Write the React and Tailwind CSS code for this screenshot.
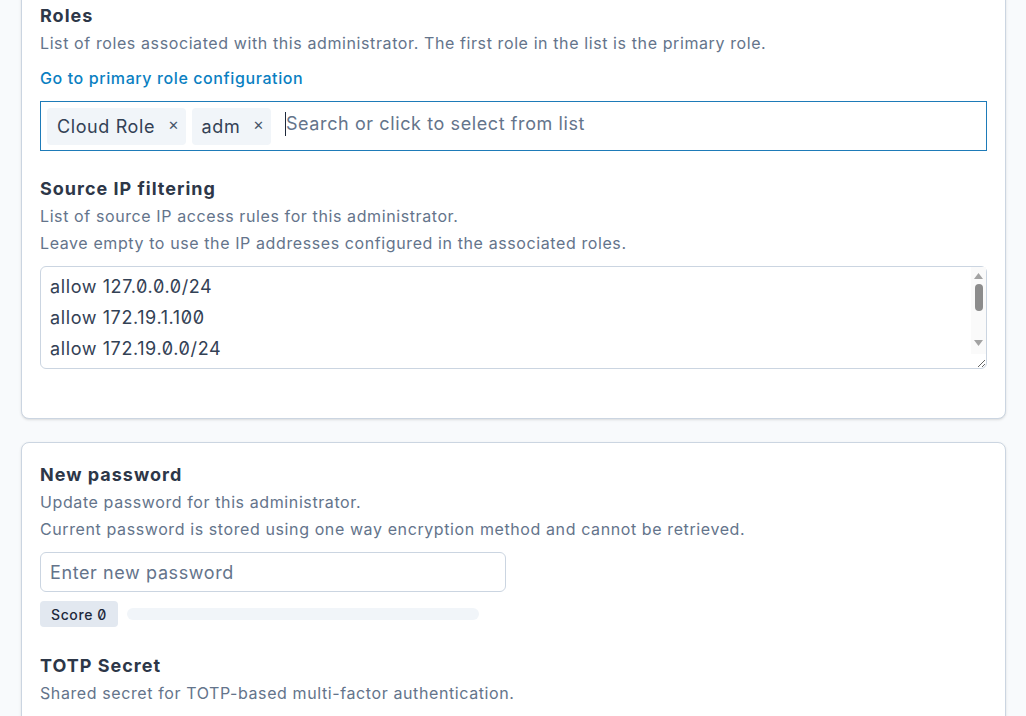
import { useState } from "react";

const ipRules = [
  "allow 127.0.0.0/24",
  "allow 172.19.1.100",
  "allow 172.19.0.0/24",
  "allow 10.10.0.0/16",
  "allow 192.168.1.0/24",
  "deny 0.0.0.0/0",
].join("\n");

function Tag({ label }) {
  return (
    <span className="flex items-center h-[37px] pl-[10px] pr-[6px] rounded bg-[#f1f5f9] text-[18px] text-[#334155]">
      {label}
      <span className="ml-[13px] text-[13px] text-[#475569]">✕</span>
    </span>
  );
}

// fake classic scrollbar, the headless browser hides native ones
function ScrollStrip() {
  return (
    <div className="absolute top-[1px] right-[1px] bottom-[15px] w-[15px] bg-[#fafafa] flex flex-col items-center">
      <svg width="9" height="6" viewBox="0 0 9 6" className="mt-[6px]">
        <path d="M4.5 0 L9 6 L0 6 Z" fill="#a3a3a3" />
      </svg>
      <div className="mt-[5px] w-[8px] h-[27px] rounded-full bg-[#8c8c8c]" />
      <div className="flex-1" />
      <svg width="9" height="6" viewBox="0 0 9 6" className="mb-[8px]">
        <path d="M0 0 L9 0 L4.5 6 Z" fill="#a3a3a3" />
      </svg>
    </div>
  );
}

function App() {
  const [pw, setPw] = useState("");

  return (
    <div className="min-h-screen bg-[#f8fafc] pl-[21px] pr-[20px] font-['Inter',_'Liberation_Sans',_sans-serif] tracking-[0.6px] overflow-hidden">
      {/* roles + ip filtering */}
      <section className="-mt-[23px] bg-white border border-[#cbd5e1] rounded-lg shadow-sm pt-[24px] pb-[49px] px-[18px]">
        <h2 className="text-[18px] leading-[28px] font-bold tracking-[1px] text-[#2d3748]">Roles</h2>
        <p className="text-[16px] leading-[27px] text-[#64748b]">
          List of roles associated with this administrator. The first role in the list is the primary role.
        </p>
        <a href="#" className="block mt-[8px] text-[16px] leading-[27px] font-medium text-[#0a7fc2]">
          Go to primary role configuration
        </a>

        <div className="mt-[9px] h-[50px] border border-[#1e7bb8] flex items-center gap-[6px] px-[6px]">
          <Tag label="Cloud Role" />
          <Tag label="adm" />
          <div className="ml-[8px] flex items-center -mt-[5px] text-[18px] text-[#64748b]">
            <span className="w-px h-[24px] bg-[#1e293b]" />
            <span>Search or click to select from list</span>
          </div>
        </div>

        <h2 className="mt-[24px] text-[18px] leading-[28px] font-bold tracking-[1px] text-[#2d3748]">
          Source IP filtering
        </h2>
        <p className="text-[16px] leading-[27px] text-[#64748b]">
          List of source IP access rules for this administrator.
        </p>
        <p className="text-[16px] leading-[27px] text-[#64748b]">
          Leave empty to use the IP addresses configured in the associated roles.
        </p>
        <div className="relative mt-[9px]">
          <textarea
            defaultValue={ipRules}
            rows={3}
            className="block w-full h-[103px] border border-[#cbd5e1] rounded-md pl-[9px] pr-[20px] py-[4px] text-[18px] leading-[31px] text-[#334155] [font-feature-settings:'zero'] outline-none"
          />
          <ScrollStrip />
        </div>
      </section>

      {/* password + totp */}
      <section className="mt-[23px] bg-white border border-[#cbd5e1] rounded-lg shadow-sm pt-[18px] pb-[40px] px-[18px]">
        <h2 className="text-[18px] leading-[28px] font-bold tracking-[1px] text-[#2d3748]">New password</h2>
        <p className="text-[16px] leading-[27px] text-[#64748b]">Update password for this administrator.</p>
        <p className="text-[16px] leading-[27px] text-[#64748b]">
          Current password is stored using one way encryption method and cannot be retrieved.
        </p>
        <input
          type="password"
          value={pw}
          onChange={(e) => setPw(e.target.value)}
          placeholder="Enter new password"
          className="mt-[9px] block w-[466px] h-[40px] border border-[#cbd5e1] rounded-md px-[9px] text-[18px] text-[#334155] placeholder:text-[#64748b] outline-none"
        />
        <div className="mt-[9px] flex items-center gap-[9px]">
          <span className="h-[26px] px-[11px] flex items-center rounded bg-[#e2e8f0] text-[14px] font-medium text-[#1e293b] [font-feature-settings:'zero']">
            Score 0
          </span>
          <div className="w-[352px] h-[12px] rounded-full bg-[#f1f5f9]" />
        </div>

        <h2 className="mt-[25px] text-[18px] leading-[28px] font-bold tracking-[1px] text-[#2d3748]">TOTP Secret</h2>
        <p className="text-[16px] leading-[27px] text-[#64748b]">
          Shared secret for TOTP-based multi-factor authentication.
        </p>
      </section>
    </div>
  );
}

export default App;
